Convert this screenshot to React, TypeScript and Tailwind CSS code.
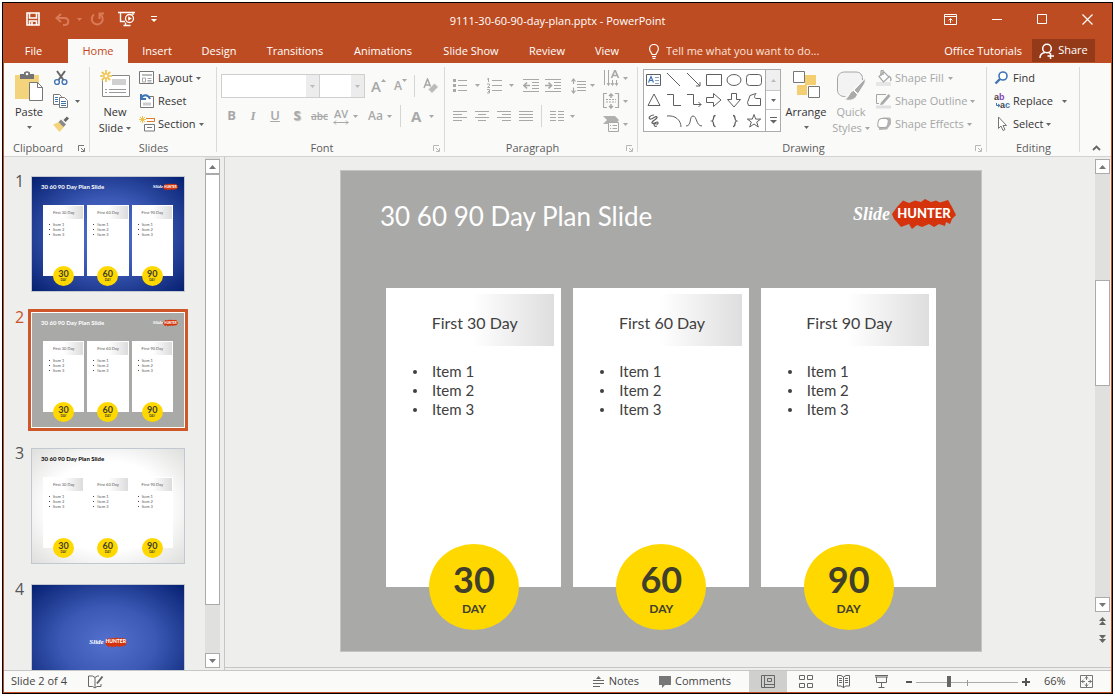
import React, { type ReactNode } from "react";

type IconProps = { w?: number; h?: number; children: ReactNode; className?: string };

function Icon({ w = 16, h = 16, children, className = "" }: IconProps) {
  return (
    <svg
      width={w}
      height={h}
      viewBox={`0 0 ${w} ${h}`}
      fill="none"
      stroke="currentColor"
      strokeWidth="1"
      aria-hidden="true"
      className={`block shrink-0 ${className}`}
    >
      {children}
    </svg>
  );
}

function Caret({ className = "" }: { className?: string }) {
  return (
    <Icon w={5} h={3} className={className}>
      <path d="M0 0h5L2.500 3z" fill="currentColor" stroke="none" />
    </Icon>
  );
}

type BtnProps = { label?: string; className?: string; children: ReactNode };

function Btn({ label, className = "", children }: BtnProps) {
  return (
    <button type="button" aria-label={label} className={`flex shrink-0 items-center ${className}`}>
      {children}
    </button>
  );
}

function Divider({ className = "" }: { className?: string }) {
  return <div className={`h-[22px] w-px shrink-0 bg-[#d6d6d6] ${className}`} />;
}

function Launcher({ muted = false }: { muted?: boolean }) {
  return (
    <Btn label="More options" className={`absolute right-[5px] bottom-1 ${muted ? "text-[#b8b8b8]" : "text-[#777]"}`}>
      <Icon w={7} h={7}>
        <path d="M.5 6V.5H6M3 3l3 3M6.500 3v3.500H3" />
      </Icon>
    </Btn>
  );
}

type GroupProps = { title: string; className: string; launcher?: "on" | "muted"; children: ReactNode };

function Group({ title, className, launcher, children }: GroupProps) {
  return (
    <section aria-label={title} className={`relative flex shrink-0 flex-col ${className}`}>
      <div className="flex h-[77px] pt-1">{children}</div>
      <div className={`h-4 text-center leading-4 text-[#5c5c5c] ${launcher ? "pr-[18px]" : ""}`}>{title}</div>
      {launcher && <Launcher muted={launcher === "muted"} />}
      <div className="absolute top-1 right-0 bottom-1 w-px bg-[#dadada]" />
    </section>
  );
}

/* ---------- title bar and tabs ---------- */

function TitleBar() {
  return (
    <div className="relative flex h-9 items-center justify-between pb-1">
      <div className="flex items-center pl-[23px]">
        <Btn label="Save">
          <Icon w={14} h={14} className="text-white">
            <path d="M1 1h12v12H1zM3.500 1v5h7V1M3.500 13V9h7v4M6 10v3" strokeWidth="1.600" />
          </Icon>
        </Btn>
        <Btn label="Undo" className="ml-[15px] gap-[7px] text-[#d97a58]">
          <Icon w={15} h={13}>
            <path d="M6 1L1.500 5 6 9M2 5h7.500c5 0 5 7 0 7H8" strokeWidth="2" />
          </Icon>
          <Caret />
        </Btn>
        <Btn label="Repeat" className="ml-2 text-[#d97a58]">
          <Icon w={15} h={14}>
            <path d="M4 2.500a5.500 5.500 0 1 0 6.500 0M9.500 7V1.500H14" strokeWidth="2" />
          </Icon>
        </Btn>
        <Btn label="Start from beginning" className="ml-[13px] text-white">
          <Icon w={17} h={16}>
            <path d="M0 1.500h17M2.500 2v8.500H7M15 2v2M5.500 14.500h7M7.500 11.500v3" strokeWidth="1.400" />
            <circle cx="11.500" cy="7.500" r="4" strokeWidth="1.300" />
            <path d="M10.200 5.200v4.600l3.600-2.300z" fill="currentColor" stroke="none" />
          </Icon>
        </Btn>
        <Btn label="Customize toolbar" className="ml-4 text-white">
          <Icon w={6} h={7}>
            <path d="M0 .5h6" />
            <path d="M0 3h6L3 6z" fill="currentColor" stroke="none" />
          </Icon>
        </Btn>
      </div>
      <h1 className="pointer-events-none absolute inset-x-0 top-2.5 text-center leading-4 text-white">
        9111-30-60-90-day-plan.pptx - PowerPoint
      </h1>
      <div className="flex items-center gap-[35px] pr-[19px] text-white">
        <Btn label="Ribbon display options">
          <Icon w={13} h={11}>
            <path d="M.5.5h12v10H.5zM.5 2.500h12M6.500 9V4.500M4.500 6.500l2-2 2 2" />
          </Icon>
        </Btn>
        <Btn label="Minimize">
          <Icon w={10} h={10}>
            <path d="M0 5.500h10" />
          </Icon>
        </Btn>
        <Btn label="Maximize">
          <Icon w={10} h={10}>
            <path d="M.5.5h9v9h-9z" />
          </Icon>
        </Btn>
        <Btn label="Close">
          <Icon w={11} h={11}>
            <path d="M.5.5l10 10M10.500.5l-10 10" strokeWidth="1.200" />
          </Icon>
        </Btn>
      </div>
    </div>
  );
}

const tabs = [
  { name: "Insert", width: "w-[58px]" },
  { name: "Design", width: "w-[66px]" },
  { name: "Transitions", width: "w-[86px]" },
  { name: "Animations", width: "w-[90px]" },
  { name: "Slide Show", width: "w-[86px]" },
  { name: "Review", width: "w-[66px]" },
  { name: "View", width: "w-[54px]" },
];

function Tabs() {
  return (
    <nav className="flex h-6 items-stretch text-white">
      <button type="button" className="w-[60px] pl-px">File</button>
      <button type="button" className="ml-[5px] w-[60px] bg-[#fafaf9] text-[#c5461b]">Home</button>
      {tabs.map((t) => (
        <button key={t.name} type="button" className={t.width}>
          {t.name}
        </button>
      ))}
      <label className="ml-[15px] flex flex-1 items-center gap-[7px]">
        <Icon w={10} h={15}>
          <path d="M3 10.500c0-2-2.400-2.600-2.400-5.600a4.400 4.400 0 0 1 8.800 0c0 3-2.400 3.600-2.400 5.600zM3 12.500h4M3.500 14.300h3" strokeWidth="1.200" />
        </Icon>
        <input
          aria-label="Tell me what you want to do"
          placeholder="Tell me what you want to do..."
          className="min-w-0 flex-1 bg-transparent outline-none placeholder:text-[#fbe3d9]"
        />
      </label>
      <button type="button" className="px-2.5">Office Tutorials</button>
      <button type="button" className="mr-[17px] mb-px flex w-[63px] items-center justify-center gap-[3px] bg-[#943a19]">
        <Icon w={16} h={16}>
          <circle cx="8" cy="5.500" r="4.300" strokeWidth="1.500" />
          <path d="M1 15c0-3 2-5 5-5.500M9.500 9.500l1.500 1M11.500 10v6M8.500 13h6.500" strokeWidth="1.500" />
        </Icon>
        Share
      </button>
    </nav>
  );
}

/* ---------- ribbon ---------- */

function ClipboardGroup() {
  return (
    <Group title="Clipboard" className="w-[86px]" launcher="on">
      <Btn className="ml-[9px] w-8 flex-col pt-1">
        <Icon w={29} h={30}>
          <path d="M0 4h24v24H0z" fill="#f3d47c" stroke="none" />
          <path d="M5 3h4V1.500Q12 -1 15 1.500V3h4v5H5z" fill="#737373" stroke="none" />
          <circle cx="12" cy="3" r="1.300" fill="#fff" stroke="none" />
          <path d="M14.500 11.500h8l5 5v13h-13z" fill="#fff" stroke="#777" />
          <path d="M22.500 11.500v5h5" stroke="#777" />
        </Icon>
        <span className="mt-[3px] leading-4">Paste</span>
        <Caret className="mt-[6px] text-[#666]" />
      </Btn>
      <div className="ml-2 flex flex-col gap-[7px] pt-[3px]">
        <Btn label="Cut" className="h-4">
          <Icon>
            <path d="M4 1l6.500 9M12 1L5.500 10" stroke="#666" strokeWidth="2" />
            <circle cx="4" cy="12" r="2.400" stroke="#3f74b5" strokeWidth="1.400" />
            <circle cx="11.500" cy="12" r="2.400" stroke="#3f74b5" strokeWidth="1.400" />
          </Icon>
        </Btn>
        <Btn label="Copy" className="h-4 gap-[6px]">
          <Icon>
            <path d="M.5 1.500h6l2 2v8h-8z" stroke="#777" fill="#fff" />
            <path d="M2 4.500h3M2 6.500h3M2 8.500h3" stroke="#3f74b5" />
            <path d="M6.500 4.500h5l3 3v7h-8z" stroke="#777" fill="#fff" />
            <path d="M8 8.500h5M8 10.500h5M8 12.500h5" stroke="#3f74b5" />
          </Icon>
          <Caret className="text-[#666]" />
        </Btn>
        <Btn label="Format painter" className="h-4">
          <Icon>
            <path d="M0 8.500L6 6l5 5-4.500 5z" fill="#f3d47c" stroke="none" />
            <path d="M8 3.500l5 5-2.500 2.500-5-5z" fill="#888" stroke="none" />
            <path d="M11.500 5l3.500-3.500" stroke="#666" strokeWidth="3" />
          </Icon>
        </Btn>
      </div>
    </Group>
  );
}

function SlidesGroup() {
  return (
    <Group title="Slides" className="w-[127px]">
      <Btn className="ml-2 w-[34px] flex-col pt-[3px]">
        <Icon w={30} h={29}>
          <path d="M2.500 5.500h27v21h-27z" fill="#fff" stroke="#888" />
          <path d="M12 9h14v6H12z" fill="#d0d0d0" stroke="none" />
          <path d="M5 19.500h2M9 19.500h17M5 22.500h2M9 22.500h17" stroke="#999" />
          <circle cx="6" cy="6" r="5.500" fill="#fafaf9" stroke="none" />
          <path d="M6 0v12M0 6h12M1.800 1.800l8.400 8.400M10.200 1.800l-8.400 8.400" stroke="#f0c24b" strokeWidth="1.700" />
          <circle cx="6" cy="6" r="2" fill="#fff" stroke="#f0c24b" />
        </Icon>
        <span className="mt-[5px] leading-4">New</span>
        <span className="flex items-center gap-[3px] leading-4">
          Slide <Caret className="text-[#666]" />
        </span>
      </Btn>
      <div className="ml-[7px] flex flex-col gap-[7px] pt-[3px]">
        <Btn className="h-4 gap-[3px]">
          <Icon>
            <path d="M.5 1.500h14v12H.5z" fill="#fff" stroke="#777" />
            <path d="M3 4h10v2H3z" fill="#bbb" stroke="none" />
            <path d="M3.500 8v4h3V8zM8.500 8.500h4M8.500 10.500h4M8.500 12h4" stroke="#aaa" />
          </Icon>
          Layout
          <Caret className="text-[#666]" />
        </Btn>
        <Btn className="h-4 gap-[3px]">
          <Icon>
            <path d="M1.500 6v8.500h13v-11H8" fill="#fff" stroke="#777" />
            <path d="M4 9.500h8v3H4z" fill="#ccc" stroke="none" />
            <path d="M2 1v5h5M2 5.500C4 1 9 1 11 6" stroke="#3f74b5" strokeWidth="2" />
          </Icon>
          Reset
        </Btn>
        <Btn className="h-4 gap-[3px]">
          <Icon>
            <path d="M7 2.500h9M8 5.500h7.500V2.500" stroke="#e07a2e" />
            <path d="M5.500 8.500h10v6.500h-10zM8 11.500h5" fill="#fff" stroke="#777" />
            <path d="M3.500 0v7M0 3.500h7M1 1l5 5M6 1L1 6" stroke="#f0c24b" />
          </Icon>
          Section
          <Caret className="text-[#666]" />
        </Btn>
      </div>
    </Group>
  );
}

function Combo({ label, className }: { label: string; className: string }) {
  return (
    <div className={`relative h-6 border border-[#cfcfcf] bg-white ${className}`}>
      <select aria-label={label} disabled className="h-full w-full appearance-none bg-white opacity-100">
        <option></option>
      </select>
      <div className="pointer-events-none absolute inset-y-0 right-0 flex w-[13px] items-center justify-center bg-[#ececec] text-[#bbb]">
        <Caret />
      </div>
    </div>
  );
}

function FontGroup() {
  return (
    <Group title="Font" className="w-[228px] text-[#a8a8a8]" launcher="muted">
      <div className="flex flex-col gap-1.5 pt-[7px] pl-1">
        <div className="flex h-6 items-center">
          <Combo label="Font" className="w-[99px]" />
          <Combo label="Font size" className="-ml-px w-[46px]" />
          <Btn label="Increase font size" className="ml-1.5 h-6 items-start">
            <span className="text-[15px] leading-6 font-semibold">A</span>
            <Icon w={5} h={3} className="mt-[5px]">
              <path d="M0 3h5L2.500 0z" fill="currentColor" stroke="none" />
            </Icon>
          </Btn>
          <Btn label="Decrease font size" className="ml-2 h-6 items-start">
            <span className="text-xs leading-6 font-semibold">A</span>
            <Caret className="mt-[5px]" />
          </Btn>
          <Divider className="ml-[7px]" />
          <Btn label="Clear formatting" className="ml-2">
            <Icon w={16} h={16}>
              <path d="M1 10L4.500 1 8 10M2.500 7h4" strokeWidth="1.500" />
              <path d="M5 11.500L11.500 5l4 4L9 15.500z" fill="#bbb" stroke="#fafaf9" />
            </Icon>
          </Btn>
        </div>
        <div className="flex h-6 items-center text-[13px]">
          <Btn label="Bold" className="w-[21px] justify-center font-bold">B</Btn>
          <Btn label="Italic" className="w-[22px] justify-center font-['Liberation_Serif',serif] font-bold italic">I</Btn>
          <Btn label="Underline" className="w-[22px] justify-center font-semibold underline">U</Btn>
          <Btn label="Text shadow" className="w-[22px] justify-center font-bold [text-shadow:1px_1px_1px_#bbb]">S</Btn>
          <Btn label="Strikethrough" className="w-[23px] justify-center text-[10px] font-semibold line-through">abc</Btn>
          <Btn label="Character spacing" className="ml-0.5 w-[29px] gap-1">
            <span className="flex flex-col items-center">
              <span className="text-[11px] leading-3 font-semibold">AV</span>
              <Icon w={16} h={5}>
                <path d="M.5 2.500h15M3 .5l-2 2 2 2M13 .5l2 2-2 2" />
              </Icon>
            </span>
            <Caret />
          </Btn>
          <Btn label="Change case" className="ml-1.5 gap-1 font-semibold">
            <span className="text-xs">Aa</span>
            <Caret />
          </Btn>
          <Divider className="ml-2" />
          <Btn label="Font color" className="ml-2.5 gap-2 font-bold">
            <span className="text-[15px]">A</span>
            <Caret />
          </Btn>
        </div>
      </div>
    </Group>
  );
}

const alignments = [
  { name: "Align left", d: "M0 1.500h14M0 4.500h9M0 7.500h14M0 10.500h9" },
  { name: "Center", d: "M0 1.500h14M3 4.500h8M0 7.500h14M3 10.500h8" },
  { name: "Align right", d: "M0 1.500h14M5 4.500h9M0 7.500h14M5 10.500h9" },
  { name: "Justify", d: "M0 1.500h14M0 4.500h14M0 7.500h14M0 10.500h14" },
];

function ParagraphGroup() {
  return (
    <Group title="Paragraph" className="w-[193px] text-[#a8a8a8]" launcher="muted">
      <div className="flex w-[158px] flex-col gap-1.5 pt-[7px] pl-2">
        <div className="flex h-6 items-center pb-px">
          <Btn label="Bullets" className="w-[34px] gap-2">
            <Icon w={14} h={15}>
              <path d="M5 2.500h9M5 7.500h9M5 12.500h9" />
              <path d="M0 1h3v3H0zM0 6h3v3H0zM0 11h3v3H0z" fill="currentColor" stroke="none" />
            </Icon>
            <Caret />
          </Btn>
          <Btn label="Numbering" className="w-9 gap-[7px]">
            <Icon w={15} h={16}>
              <path d="M5 2.500h10M5 7.500h10M5 12.500h10M1.500 0v4M0 1h1.500M0 6h2.500v1.500L.5 9.500h2.500M0 11.500h2.500v3.500H0M1 13.500h1.500" />
            </Icon>
            <Caret />
          </Btn>
          <Btn label="Decrease indent" className="w-[22px]">
            <Icon w={16} h={13}>
              <path d="M0 .5h16M9 3.500h7M9 6.500h7M9 9.500h7M0 12.500h16" />
              <path d="M1 6.500h6M4 3.500l-3 3 3 3" strokeWidth="1.700" />
            </Icon>
          </Btn>
          <Btn label="Increase indent" className="w-[26px]">
            <Icon w={16} h={13}>
              <path d="M0 .5h16M9 3.500h7M9 6.500h7M9 9.500h7M0 12.500h16" />
              <path d="M0 6.500h6M3.500 3.500l3 3-3 3" strokeWidth="1.700" />
            </Icon>
          </Btn>
          <Btn label="Line spacing" className="gap-1">
            <Icon w={15} h={16}>
              <path d="M6 3.500h9M6 6.500h9M6 9.500h9M6 12.500h9M2.500 1v5M.5 3.500l2-2.500 2 2.500M2.500 9.500V15M.5 12.500l2 2.500 2-2.500" strokeWidth="1.200" />
            </Icon>
            <Caret />
          </Btn>
        </div>
        <div className="flex h-6 items-center">
          {alignments.map((a) => (
            <Btn key={a.name} label={a.name} className="w-[22px]">
              <Icon w={14} h={12}>
                <path d={a.d} />
              </Icon>
            </Btn>
          ))}
          <Divider />
          <Btn label="Columns" className="ml-2 gap-1.5">
            <Icon w={14} h={12}>
              <path d="M0 1.500h6M0 4.500h6M0 7.500h6M0 10.500h6M8 1.500h6M8 4.500h6M8 7.500h6M8 10.500h6" />
            </Icon>
            <Caret />
          </Btn>
        </div>
      </div>
      <div className="flex flex-col gap-[7px] pt-[3px]">
        <Btn label="Text direction" className="h-4 gap-[3px]">
          <Icon w={17} h={17}>
            <path d="M1.500 0v15M5.500 0v15M9.500 10v5M13.500 10v5M4 13l1.500 2.500L7 13M8 13l1.500 2.500L11 13M12 13l1.500 2.500L15 13" />
            <path d="M8.500 8L12 0l3.500 8M10 5.500h4" strokeWidth="1.600" />
          </Icon>
          <Caret />
        </Btn>
        <Btn label="Align text" className="h-4 gap-[3px]">
          <Icon w={17} h={16}>
            <path d="M4 .5H.5v14H4M12 .5h3.500v14H12" strokeWidth="1.200" />
            <path d="M3 6.500h10M3 9h10" strokeDasharray="2 1" />
            <path d="M8 1v4M6 3l2-2 2 2M8 11v4M6 13l2 2 2-2" strokeWidth="1.500" />
          </Icon>
          <Caret />
        </Btn>
        <Btn label="Convert to SmartArt" className="h-4 gap-[3px]">
          <Icon w={17} h={16}>
            <path d="M0 0h12l4 4-3 4H0l4-4z" fill="#b0b0b0" stroke="none" />
            <path d="M5.500 6.500h10v9h-10z" fill="#fafaf9" />
            <path d="M7 9.500h1M9.500 9.500H14M7 12.500h1M9.500 12.500H14" />
          </Icon>
          <Caret />
        </Btn>
      </div>
    </Group>
  );
}

const shapes: { name: string; node: ReactNode }[] = [
  {
    name: "Text box",
    node: (
      <>
        <path d="M.5 2.500h14v11H.5z" />
        <path d="M2.500 10.500L5 4.500l2.500 6M3.500 8.500h3" stroke="#3f74b5" strokeWidth="1.200" />
        <path d="M9 5.500h4M9 8.500h4M9 11.500h4" stroke="#8aa4c8" />
      </>
    ),
  },
  { name: "Line", node: <path d="M1 1l13 13" /> },
  { name: "Arrow", node: <path d="M1 1l13 13M14 10v4h-4" /> },
  { name: "Rectangle", node: <path d="M.5 2.500h15v11H.5z" /> },
  { name: "Oval", node: <ellipse cx="8" cy="8" rx="7" ry="5.500" /> },
  { name: "Rounded rectangle", node: <rect x=".5" y="2.500" width="15" height="11" rx="3" /> },
  { name: "Triangle", node: <path d="M8 2l6 11.500H2z" /> },
  { name: "Elbow connector", node: <path d="M1 2.500h6.500v11H15" /> },
  { name: "Elbow arrow", node: <path d="M1 2.500h6.500v10H15M12.500 10l2.500 2.500-2.500 2.500" /> },
  { name: "Right arrow", node: <path d="M.5 5.500h7V1.500L15 8l-7.500 6.500v-4h-7z" /> },
  { name: "Down arrow", node: <path d="M5.500 1.500h5v6h4L8 15 1.500 7.500h4z" /> },
  { name: "Freeform", node: <path d="M4 3.500l6-2C8 4 8 6 10 6.500h4.500v7h-12l-1-3z" /> },
  { name: "Scribble", node: <path d="M8 2C4 2 2 5 4 6s6-4 7-2-6 4-5 6 6-3 6 0-4-1-4 1 1 3 3 2" strokeWidth="1.200" /> },
  { name: "Arc", node: <path d="M1 3c8-1 14 4 14 11" /> },
  { name: "Curve", node: <path d="M0 13C6 13 3 3 7 3s3 10 9 10" /> },
  { name: "Left brace", node: <path d="M9.500 2.500C6 2.500 9 7 6 8c3 1 0 5.500 3.500 5.500" strokeWidth="1.300" /> },
  { name: "Right brace", node: <path d="M7 2.500C10.500 2.500 7.500 7 10.500 8c-3 1 0 5.500-3.500 5.500" strokeWidth="1.300" /> },
  { name: "Star", node: <path d="M8 1.500l1.700 4.600h5L10.700 9l1.600 5L8 11l-4.300 3 1.600-5L1.300 6.100h5z" /> },
];

function DrawingGroup() {
  return (
    <Group title="Drawing" className="w-[349px]" launcher="muted">
      <div className="mt-0.5 ml-[5px] flex h-[63px] w-[138px] border border-[#ababab] bg-white">
        <div className="grid flex-1 grid-cols-6 grid-rows-3 place-items-center pr-px text-[#5f5f5f]">
          {shapes.map((s) => (
            <Btn key={s.name} label={s.name}>
              <Icon>{s.node}</Icon>
            </Btn>
          ))}
        </div>
        <div className="flex w-[15px] flex-col border-l border-[#ababab]">
          <Btn label="Scroll up" className="h-5 justify-center bg-[#efefef] text-[#bbb]">
            <Icon w={5} h={3}>
              <path d="M0 3h5L2.500 0z" fill="currentColor" stroke="none" />
            </Icon>
          </Btn>
          <Btn label="Scroll down" className="h-5 justify-center border-y border-[#c6c6c6] text-[#666]">
            <Caret />
          </Btn>
          <Btn label="More shapes" className="flex-1 justify-center text-[#666]">
            <Icon w={7} h={7}>
              <path d="M0 .5h7" />
              <path d="M0 3h7L3.500 6.500z" fill="currentColor" stroke="none" />
            </Icon>
          </Btn>
        </div>
      </div>
      <Btn className="ml-0.5 w-[46px] flex-col pt-1">
        <Icon w={27} h={28}>
          <path d="M12 4h11v10H12zM4 14h10v10H4z" fill="#f3cf72" stroke="none" />
          <path d="M.5.5h11v11H.5zM15.500 15.500h11v11h-11z" fill="#fff" stroke="#777" />
        </Icon>
        <span className="mt-[5px] leading-4">Arrange</span>
        <Caret className="mt-[6px] text-[#666]" />
      </Btn>
      <Btn className="w-[44px] flex-col pt-1 text-[#a6a6a6]">
        <Icon w={29} h={31}>
          <path d="M25.500 9V8c0-4-2-7-7-7H8C3 1 .5 4 .5 8v11c0 4 3 6.500 7 6.500h1" fill="#f3f3f3" />
          <path d="M28.500 7L17 19l4 4 7-11z" fill="#aaa" stroke="#fafaf9" />
          <path d="M16.500 19.500l4 4c-2 5-7 7-13 5 5-2 4-7 9-9z" fill="#aaa" stroke="#fafaf9" />
        </Icon>
        <span className="mt-0.5 leading-4">Quick</span>
        <span className="flex items-center gap-[3px] leading-4">
          Styles <Caret />
        </span>
      </Btn>
      <div className="ml-[3px] flex flex-col gap-[7px] pt-[3px] text-[#a6a6a6]">
        <Btn className="h-4 gap-[3px]">
          <Icon>
            <path d="M0 12h15v4H0z" fill="#e6e6e6" stroke="none" />
            <path d="M3 6.500l5-4.500 5 5-5.500 5z" fill="#fff" strokeWidth="1.200" />
            <path d="M5 6V2q0-2 2-1.500V5M13 6q3 2 1.500 5" strokeWidth="1.300" />
          </Icon>
          Shape Fill
          <Caret className="ml-px" />
        </Btn>
        <Btn className="h-4 gap-[3px]">
          <Icon>
            <path d="M10 1.500H.5v9H3" />
            <path d="M0 14h15" stroke="#e0e0e0" strokeWidth="3" />
            <path d="M5 9.500L12.500 1l2 2-7.500 8.500-3 .5z" fill="#aaa" stroke="none" />
          </Icon>
          Shape Outline
          <Caret />
        </Btn>
        <Btn className="h-4 gap-[3px]">
          <Icon>
            <path d="M3 5l4-3.500h6q2 0 2 2V8l-4 5.500-8 .5z" fill="#b4b4b4" stroke="none" />
            <rect x="2" y="2.500" width="10" height="9" rx="3" fill="#fff" transform="skewX(-8) translate(1 0)" />
          </Icon>
          Shape Effects
          <Caret />
        </Btn>
      </div>
    </Group>
  );
}

function EditingGroup() {
  return (
    <Group title="Editing" className="w-[93px]">
      <div className="flex flex-col gap-[7px] pt-[3px] pl-[7px]">
        <Btn className="h-4 gap-[3px]">
          <Icon>
            <circle cx="9" cy="6" r="4" stroke="#3f74b5" strokeWidth="1.600" fill="#fff" />
            <path d="M6 9l-4.500 4.500" stroke="#3f74b5" strokeWidth="2.400" />
          </Icon>
          Find
        </Btn>
        <Btn className="h-4 gap-[3px]">
          <span className="flex w-4 flex-col font-['Liberation_Sans',sans-serif] text-[9px] leading-[8px] font-bold text-[#444]">
            <span className="text-left">a<span className="text-[#8a3fb5]">b</span></span>
            <span className="flex items-center justify-end">
              <Icon w={4} h={5} className="text-[#3f74b5]">
                <path d="M.5 0v2.500H4M2 1l2 1.500L2 4" />
              </Icon>
              a<span className="text-[#3f74b5]">c</span>
            </span>
          </span>
          Replace
          <Caret className="ml-1.5 text-[#666]" />
        </Btn>
        <Btn className="h-4 gap-[3px]">
          <Icon>
            <path d="M4.500 1v11.500L7 10l2 4.500 2-1L9 9.500h3.500z" fill="#fff" stroke="#777" />
          </Icon>
          Select
          <Caret className="text-[#666]" />
        </Btn>
      </div>
    </Group>
  );
}

function Ribbon() {
  return (
    <div className="flex h-[94px] shrink-0 border-b border-[#d2d2d2] bg-[#fafaf9] text-[#333]">
      <ClipboardGroup />
      <SlidesGroup />
      <FontGroup />
      <ParagraphGroup />
      <DrawingGroup />
      <EditingGroup />
      <div className="flex flex-1 items-end justify-end pr-2.5 pb-[5px]">
        <Btn label="Collapse ribbon" className="text-[#666]">
          <Icon w={9} h={6}>
            <path d="M1 5l3.500-3.500L8 5" strokeWidth="1.800" />
          </Icon>
        </Btn>
      </div>
    </div>
  );
}

/* ---------- slides ---------- */

const plan = [30, 60, 90];
const items = ["Item 1", "Item 2", "Item 3"];

const blob =
  "M0 15L5 8 11 1.500 17 4 23 1.500 29 3 33 0 39 3 44 1.500 48 3.500 56 1 60 8 64 16 60 20 58 25 54 23 53 27 47 25 42 28 37 25 30 28 25 26 20 30 17 25 9 28 4 22 2 20z";

type LogoSize = "large" | "medium" | "small";

const logoStyles: Record<LogoSize, { w: number; h: number; slide: string; hunter: string; gap: string }> = {
  large: { w: 64, h: 30, slide: "text-[18px] leading-7", hunter: "text-[13px]", gap: "gap-0.5" },
  medium: { w: 22, h: 11, slide: "text-[7px] leading-3", hunter: "text-[5px]", gap: "gap-px" },
  small: { w: 15, h: 8, slide: "text-[5px] leading-2", hunter: "text-[3px]", gap: "gap-0" },
};

function Logo({ size }: { size: LogoSize }) {
  const s = logoStyles[size];
  return (
    <div className={`flex items-center text-white ${s.gap}`}>
      <span className={`font-["Liberation_Serif",serif] font-bold italic ${s.slide}`}>Slide</span>
      <div className="relative flex items-center justify-center">
        <svg width={s.w} height={s.h} viewBox="0 0 64 30" aria-hidden="true">
          <path d={blob} fill="#d4330b" />
        </svg>
        <span className={`absolute font-[Lato,sans-serif] font-black ${s.hunter}`}>HUNTER</span>
      </div>
    </div>
  );
}

function PlanSlide() {
  return (
    <article className="h-[482px] w-[642px] shrink-0 border border-[#c4c4c2] bg-[#a9a9a8] px-[45px] pt-7 font-[Lato,sans-serif] text-[#404040]">
      <header className="-mr-5 -ml-1.5 flex h-[30px] items-center justify-between">
        <h2 className="pt-1 text-[26px] leading-8 text-white">30 60 90 Day Plan Slide</h2>
        <Logo size="large" />
      </header>
      <div className="mt-[59px] grid grid-cols-3 gap-3">
        {plan.map((n) => (
          <section key={n} className="relative h-[299px] bg-white pt-1.5 pr-[7px] pl-[5px]">
            <h3 className="h-[52px] bg-linear-to-r from-white from-50% to-[#dedede] pt-[3px] pl-1 text-center text-base leading-[52px]">
              First {n} Day
            </h3>
            <ul className="mt-4 pl-[22px] text-[15px] leading-[19px]">
              {items.map((i) => (
                <li key={i} className="flex items-center gap-[15px]">
                  <span className="size-1 rounded-full bg-[#404040]" />
                  {i}
                </li>
              ))}
            </ul>
            <div className="absolute -bottom-[43px] left-[43px] flex h-[86px] w-[90px] flex-col items-center rounded-[50%] bg-[#ffd800] pt-3.5 font-bold text-[#3f3f2c]">
              <span className="text-4xl leading-[43px]">{n}</span>
              <span className="text-xs leading-4">DAY</span>
            </div>
          </section>
        ))}
      </div>
    </article>
  );
}

function MiniPlan({ dark }: { dark: boolean }) {
  return (
    <>
      <div className="flex h-[10px] items-center justify-between pr-1.5 pl-[9px]">
        <span className={`font-[Lato] text-[6px] leading-[10px] ${dark ? "font-bold text-white" : "font-bold text-black"}`}>
          30 60 90 Day Plan Slide
        </span>
        {dark && <Logo size="small" />}
      </div>
      <div className="mt-[13px] grid grid-cols-3 gap-[3px] px-[11px] text-[#555]">
        {plan.map((n) => (
          <div key={n} className="relative h-[71px] bg-white p-px">
            <div className="h-[13px] bg-linear-to-r from-white from-50% to-[#dcdcdc] text-center text-[4px] leading-[13px]">
              First {n} Day
            </div>
            <ul className="mt-[3px] pl-[5px] text-[4px] leading-[5px]">
              {items.map((i) => (
                <li key={i} className="flex items-center gap-[3px]">
                  <span className="size-px bg-[#444]" />
                  {i}
                </li>
              ))}
            </ul>
            <div className="absolute -bottom-2.5 left-2.5 flex h-5 w-[21px] flex-col items-center rounded-[50%] bg-[#ffd800] pt-1 font-bold text-[#3f3f2c]">
              <span className="text-[9px] leading-2">{n}</span>
              <span className="text-[3px] leading-1">DAY</span>
            </div>
          </div>
        ))}
      </div>
    </>
  );
}

const thumbs = [
  { bg: "bg-[radial-gradient(ellipse_at_center,#5571cf_0%,#3a58b4_45%,#062070_100%)]", kind: "dark" },
  { bg: "bg-[#a9a9a8]", kind: "dark" },
  { bg: "bg-[radial-gradient(ellipse_at_center,#ffffff_55%,#dededd_100%)]", kind: "light" },
  { bg: "bg-[radial-gradient(ellipse_at_center,#5571cf_0%,#3a58b4_45%,#062070_100%)]", kind: "logo" },
];

function ScrollButton({ label, up = false }: { label: string; up?: boolean }) {
  return (
    <Btn label={label} className="h-[15px] w-full justify-center border border-[#ababab] bg-white text-[#777]">
      <Icon w={7} h={4}>
        <path d={up ? "M0 4h7L3.500 0z" : "M0 0h7L3.500 4z"} fill="currentColor" stroke="none" />
      </Icon>
    </Btn>
  );
}

function ThumbPane() {
  const selected = 1;
  return (
    <aside className="flex w-[221px] shrink-0 border-r border-[#c6c6c6]">
      <ol className="flex flex-1 flex-col gap-[14px] overflow-hidden pt-4">
        {thumbs.map((t, i) => (
          <li key={i} className="flex h-[122px] shrink-0">
            <span
              className={`w-6 pl-[11px] text-base leading-4 ${i === selected ? "text-[#c9522a]" : "text-[#555]"}`}
            >
              {i + 1}
            </span>
            <button
              type="button"
              aria-label={`Slide ${i + 1}`}
              className={`h-[122px] w-[160px] border-[3px] p-0 text-left ${i === selected ? "border-[#cf5629]" : "border-transparent"}`}
            >
              <div
                className={`h-[116px] w-[154px] border ${i === selected ? "border-white" : "border-[#c3c7cf]"} ${t.bg} font-[Lato,sans-serif] ${t.kind === "logo" ? "flex items-center justify-center" : "pt-[5px]"}`}
              >
                {t.kind === "logo" ? <Logo size="medium" /> : <MiniPlan dark={t.kind === "dark"} />}
              </div>
            </button>
          </li>
        ))}
      </ol>
      <div className="mr-1 mb-0.5 flex w-[15px] flex-col bg-[#e0e0df] pt-0.5">
        <ScrollButton label="Scroll slides up" up />
        <div className="h-[431px] border border-[#ababab] bg-white" />
        <div className="flex-1" />
        <ScrollButton label="Scroll slides down" />
      </div>
    </aside>
  );
}

function Canvas() {
  return (
    <main className="flex min-w-0 flex-1 flex-col">
      <div className="flex min-h-0 flex-1">
        <div className="flex flex-1 justify-center overflow-hidden pt-[13px] pl-0.5">
          <PlanSlide />
        </div>
        <div className="flex w-[15px] flex-col pt-0.5 pb-6">
          <div className="flex flex-1 flex-col bg-[#e0e0df]">
            <ScrollButton label="Previous" up />
            <div className="h-[106px] flex-none" />
            <div className="h-[106px] border border-[#ababab] bg-white" />
            <div className="flex-1" />
            <ScrollButton label="Next" />
          </div>
          <div className="flex flex-col items-center gap-2.5 pt-[5px] text-[#666]">
            <Btn label="Previous slide">
              <Icon w={7} h={8}>
                <path d="M0 4h7L3.500 0zM0 8h7L3.500 4z" fill="currentColor" stroke="none" />
              </Icon>
            </Btn>
            <Btn label="Next slide">
              <Icon w={7} h={8}>
                <path d="M0 0h7L3.500 4zM0 4h7L3.500 8z" fill="currentColor" stroke="none" />
              </Icon>
            </Btn>
          </div>
        </div>
        <div className="w-px" />
      </div>
      <div className="h-[3px] border-t border-[#c6c6c6]" />
    </main>
  );
}

/* ---------- status bar ---------- */

function StatusBar() {
  return (
    <footer className="flex h-[22px] shrink-0 items-center border-t border-[#c6c6c6] bg-[#fafaf9] text-[#444]">
      <span className="w-[84px] pl-[7px]">Slide 2 of 4</span>
      <Btn label="Spelling" className="text-[#666]">
        <Icon w={16} h={14}>
          <path d="M7 2.500L4.500 1H.5v10.500h4L7 13l2-1.500h4V9M7 2.500V13M7 2.500L9.500 1H11" />
          <path d="M14.500 1.500L9 8.500" strokeWidth="2" />
        </Icon>
      </Btn>
      <div className="flex-1" />
      <Btn className="gap-[5px]">
        <Icon w={11} h={11} className="text-[#666]">
          <path d="M0 4.500h11M0 7.500h11M0 10.500h7" />
          <path d="M3 3h5L5.500 0z" fill="currentColor" stroke="none" />
        </Icon>
        Notes
      </Btn>
      <Btn className="ml-5 gap-1">
        <Icon w={12} h={12} className="text-[#777]">
          <path d="M0 0h12v9H6l-3 3V9H0z" fill="currentColor" stroke="none" />
        </Icon>
        Comments
      </Btn>
      <div className="ml-[18px] flex h-full text-[#666]">
        <Btn label="Normal view" className="w-[38px] justify-center bg-[#cfcfce]">
          <Icon w={14} h={13}>
            <path d="M.5.5h13v12H.5zM3.500.5v12M3.500 9.500h10M6.500 3.500h4v3h-4z" />
          </Icon>
        </Btn>
        <Btn label="Slide sorter" className="w-[38px] justify-center">
          <Icon w={14} h={13}>
            <path d="M.5.5h5v4h-5zM8.500.5h5v4h-5zM.5 8.500h5v4h-5zM8.500 8.500h5v4h-5z" />
          </Icon>
        </Btn>
        <Btn label="Reading view" className="w-[37px] justify-center">
          <Icon w={13} h={13}>
            <path d="M6.500 2L4 .5H.5v10.500H4L6.500 12.500 9 11h3.500V.5H9zM6.500 2v11M2 3.500h3M2 5.500h3M2 7.500h3M8 3.500h3M8 5.500h3M8 7.500h3" />
          </Icon>
        </Btn>
        <Btn label="Slide show" className="w-[38px] justify-center">
          <Icon w={13} h={13}>
            <path d="M0 .5h13M0 2h13M1.500 2v5.500h10V2M6.500 7.500V12M3.500 12.500h6" />
          </Icon>
        </Btn>
      </div>
      <Btn label="Zoom out" className="ml-1.5 text-[#555]">
        <Icon w={6} h={6}>
          <path d="M0 3h6" strokeWidth="2" />
        </Icon>
      </Btn>
      <div className="relative mx-1 flex h-4 w-[102px] items-center">
        <div className="absolute inset-x-0 top-1/2 h-px bg-[#ababab]" />
        <div className="absolute top-1.5 left-1/2 h-1.5 w-px bg-[#999]" />
        <input
          type="range"
          aria-label="Zoom"
          min={0}
          max={100}
          defaultValue={32}
          className="relative h-4 w-full appearance-none bg-transparent [&::-webkit-slider-thumb]:h-[11px] [&::-webkit-slider-thumb]:w-1 [&::-webkit-slider-thumb]:appearance-none [&::-webkit-slider-thumb]:bg-[#666]"
        />
      </div>
      <Btn label="Zoom in" className="text-[#555]">
        <Icon w={8} h={8}>
          <path d="M0 4h8M4 0v8" strokeWidth="2" />
        </Icon>
      </Btn>
      <span className="w-[50px] pl-[14px]">66%</span>
      <Btn label="Fit slide to window" className="mr-[18px] text-[#777]">
        <Icon w={13} h={13}>
          <path d="M.5.5h12v12H.5zM6.500 1v4M6.500 8v4M1 6.500h4M8 6.500h4M5 3.500l1.500-2 1.500 2M5 9.500l1.500 2 1.500-2M3.500 5l-2 1.500 2 1.500M9.500 5l2 1.500-2 1.500" />
        </Icon>
      </Btn>
    </footer>
  );
}

export default function App() {
  return (
    <div className="h-screen min-h-[600px] bg-white p-0.5 font-['Open_Sans',sans-serif] text-[11px]">
      <div className="flex h-full flex-col border border-black">
        <header className="shrink-0 bg-[#be4c22]">
          <TitleBar />
          <Tabs />
        </header>
        <div className="flex min-h-0 flex-1 flex-col border-x border-b border-[#be4c22] bg-[#eeeeec]">
          <Ribbon />
          <div className="flex min-h-0 flex-1">
            <ThumbPane />
            <Canvas />
          </div>
          <StatusBar />
        </div>
      </div>
    </div>
  );
}
